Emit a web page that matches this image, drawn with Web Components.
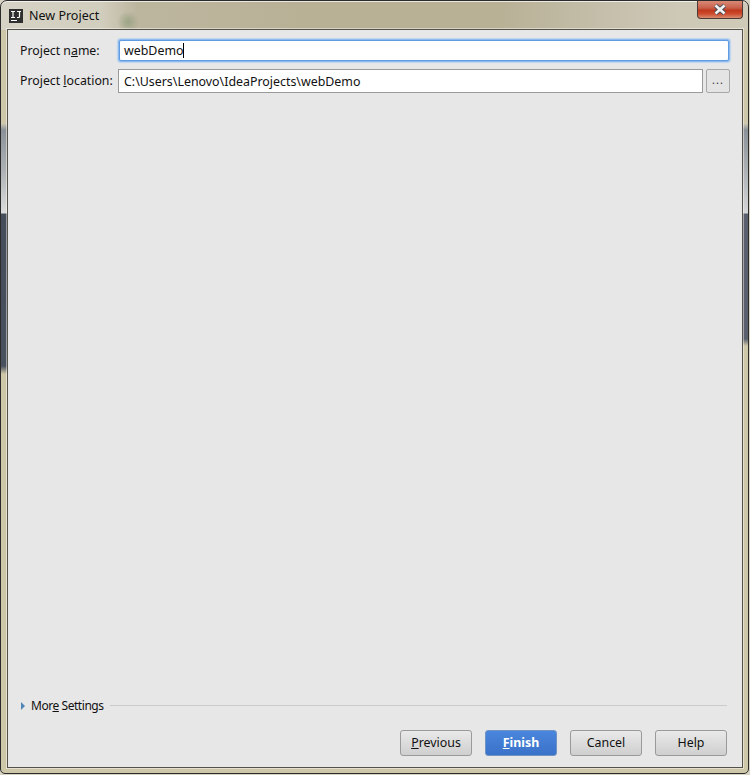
<!DOCTYPE html>
<html>
<head>
<meta charset="utf-8">
<title>New Project</title>
<style>
  html, body { margin: 0; padding: 0; background: #d8d4c4; }
  body { width: 750px; height: 775px; overflow: hidden; font-family: "Noto Sans", "Liberation Sans", sans-serif; }
</style>
</head>
<body>
<new-project-dialog>
  <form-row label="Project name:" mnemonic-at="9">
    <text-field value="webDemo" focused></text-field>
  </form-row>
  <form-row label="Project location:" mnemonic-at="8">
    <text-field value="C:\Users\Lenovo\IdeaProjects\webDemo"></text-field>
    <browse-button></browse-button>
  </form-row>
  <more-settings slot="footer"></more-settings>
  <dialog-button slot="buttons" label="Previous" mnemonic-at="0"></dialog-button>
  <dialog-button slot="buttons" label="Finish" mnemonic-at="0" primary></dialog-button>
  <dialog-button slot="buttons" label="Cancel"></dialog-button>
  <dialog-button slot="buttons" label="Help"></dialog-button>
</new-project-dialog>

<script>
// underlines one letter of a label, like the swing mnemonics
function mnemonicHtml(text, at) {
  if (at === null || at === "") return text;
  const i = Number(at);
  return text.slice(0, i) + "<u>" + text[i] + "</u>" + text.slice(i + 1);
}

class NewProjectDialog extends HTMLElement {
  constructor() {
    super();
    this.attachShadow({ mode: "open" });
    this.shadowRoot.innerHTML = `
      <style>
        :host {
          display: flex;
          flex-direction: column;
          box-sizing: border-box;
          position: relative;
          width: 749px;
          height: 774px;
          padding: 0 5px 5px 6px;
          border: 1px solid #2b2b2b;
          border-radius: 7px 7px 5px 5px;
          background:
            linear-gradient(to bottom, transparent 0, transparent 122px, #d3ccb4 122px, #8b9198 129px, #aeb2b5 170px, #dcdcdc 212px, #454c5a 213px, #4a515e 365px, #cfc8a8 373px) left top / 6px 100% no-repeat,
            linear-gradient(to bottom, transparent 0, transparent 122px, #d3ccb4 122px, #8b9198 129px, #aeb2b5 170px, #d5d6d8 212px, #5a616c 213px, #5a616c 338px, #cfc8a8 345px) right top / 5px 100% no-repeat,
            radial-gradient(circle at 127px 21px, rgba(125,145,105,.55) 0, rgba(125,145,105,.3) 5px, rgba(125,145,105,0) 11px) left top / 100% 29px no-repeat,
            linear-gradient(90deg, #d6d3c6 0, #d2cebe 100px, #bdb69f 135px, #b9b196 300px, #b9b196 500px, #c4beaa 600px, #cec9b7 680px, #cfcab8 100%) left top / 100% 29px no-repeat,
            #cfc7a9;
          box-shadow: inset 0 1px 0 rgba(255,255,255,.7);
        }
        .titlebar {
          flex: none;
          display: flex;
          align-items: center;
          gap: 6px;
          height: 28px;
          padding: 1px 0 0 2px;
          box-sizing: border-box;
          font-size: 12.5px;
          color: #111;
        }
        .close {
          position: absolute;
          top: 0;
          right: 5px;
          width: 46px;
          height: 18px;
          box-sizing: border-box;
          display: flex;
          align-items: center;
          justify-content: center;
          border: 1px solid #4d3a36;
          border-top: none;
          border-radius: 0 0 4px 4px;
          background: linear-gradient(to bottom, #d98a76 0, #c9614c 40%, #c0391c 55%, #cc4a2b 75%, #d98c70 100%);
        }
        .panel {
          flex: 1;
          display: flex;
          flex-direction: column;
          min-height: 0;
          background: #e7e7e7;
          border: 1px solid #55524a;
          box-shadow: 0 0 0 1px rgba(255,255,255,.45);
          padding: 9px 12px 11px 12px;
        }
        .fields { display: flex; flex-direction: column; gap: 7px; flex: 1; }
        .buttons { display: flex; justify-content: flex-end; gap: 13px; padding: 0 3px 0 0; margin-top: 16px; }
      </style>
      <div class="titlebar">
        <svg width="14" height="14" viewBox="0 0 14 14">
          <rect width="14" height="14" fill="#2f2f2f"/>
          <rect x="2" y="11" width="6" height="1" fill="#fff"/>
          <path d="M2 2.5H6M4 3V8M2 8.5H6M8 2.5H12M10.5 3V7.5Q10.5 8.5 9.5 8.5H8" fill="none" stroke="#fff" stroke-width="1.2"/>
        </svg>
        <span>New Project</span>
      </div>
      <div class="close">
        <svg width="14" height="11" viewBox="0 0 14 11">
          <path d="M2.5 1.5L11.5 9.5M11.5 1.5L2.5 9.5" stroke="#3c4454" stroke-width="4.4" fill="none"/>
          <path d="M2.5 1.5L11.5 9.5M11.5 1.5L2.5 9.5" stroke="#f2f2f2" stroke-width="2.8" fill="none"/>
        </svg>
      </div>
      <div class="panel">
        <div class="fields"><slot></slot></div>
        <slot name="footer"></slot>
        <div class="buttons"><slot name="buttons"></slot></div>
      </div>
    `;
  }
}

class FormRow extends HTMLElement {
  constructor() {
    super();
    this.attachShadow({ mode: "open" });
    this.shadowRoot.innerHTML = `
      <style>
        :host { display: flex; align-items: center; font-size: 12.3px; color: #111; }
        .label { flex: none; width: 98px; white-space: nowrap; padding-bottom: 1px; }
      </style>
      <span class="label"></span>
      <slot></slot>
    `;
  }
  connectedCallback() {
    this.shadowRoot.querySelector(".label").innerHTML = mnemonicHtml(
      this.getAttribute("label"),
      this.getAttribute("mnemonic-at")
    );
  }
}

class TextField extends HTMLElement {
  constructor() {
    super();
    this.attachShadow({ mode: "open" });
    this.shadowRoot.innerHTML = `
      <style>
        :host {
          flex: 1;
          display: flex;
          align-items: center;
          box-sizing: border-box;
          height: 24px;
          padding: 0 5px;
          background: #fff;
          border: 1px solid #9a9a9a;
          font-size: 12.4px;
          color: #111;
          white-space: nowrap;
        }
        :host([focused]) {
          height: 21px;
          margin: 1px;
          padding: 0 4px;
          border: 1px solid #5e9be0;
          border-radius: 2px;
          box-shadow: 0 0 0 1px #8fbbec, 0 0 1px 2px #bcd5f0;
        }
        .caret { display: none; width: 1px; height: 15px; background: #000; }
        :host([focused]) .caret { display: block; }
      </style>
      <span class="value"></span><span class="caret"></span>
    `;
  }
  connectedCallback() {
    this.shadowRoot.querySelector(".value").textContent = this.getAttribute("value");
  }
}

class BrowseButton extends HTMLElement {
  constructor() {
    super();
    this.attachShadow({ mode: "open" });
    this.shadowRoot.innerHTML = `
      <style>
        :host {
          flex: none;
          display: flex;
          align-items: center;
          justify-content: center;
          box-sizing: border-box;
          width: 24px;
          height: 24px;
          margin-left: 3px;
          padding-bottom: 3px;
          border: 1px solid #a8a8a8;
          border-radius: 2px;
          background: #e4e4e4;
          font-size: 11px;
          letter-spacing: 1px;
          color: #333;
        }
      </style>
      <span>...</span>
    `;
  }
}

class MoreSettings extends HTMLElement {
  constructor() {
    super();
    this.attachShadow({ mode: "open" });
    this.shadowRoot.innerHTML = `
      <style>
        :host { display: flex; align-items: center; font-size: 12px; color: #111; height: 16px; }
        svg { flex: none; margin: 0 6px 0 1px; }
        .text { letter-spacing: -.45px; padding-bottom: 1px; }
        .rule { flex: 1; height: 1px; background: #cbcbcb; margin: 0 3px 2px 6px; }
      </style>
      <svg width="4" height="8" viewBox="0 0 4 8"><path d="M0 0L4 4L0 8Z" fill="#4f86b5"/></svg>
      <span class="text">Mor<u>e</u> Settings</span>
      <div class="rule"></div>
    `;
  }
}

class DialogButton extends HTMLElement {
  constructor() {
    super();
    this.attachShadow({ mode: "open" });
    this.shadowRoot.innerHTML = `
      <style>
        :host {
          display: flex;
          align-items: center;
          justify-content: center;
          box-sizing: border-box;
          width: 72px;
          height: 26px;
          padding-bottom: 1px;
          border: 1px solid #9a9a9a;
          border-radius: 3px;
          background: linear-gradient(to bottom, #e9e9e9, #cfcfcf);
          font-size: 12.4px;
          color: #111;
        }
        :host([primary]) {
          border-color: #6f93c4;
          background: linear-gradient(to bottom, #4a86dd, #3a72c8);
          color: #fff;
          font-weight: 700;
        }
      </style>
      <span class="label"></span>
    `;
  }
  connectedCallback() {
    this.shadowRoot.querySelector(".label").innerHTML = mnemonicHtml(
      this.getAttribute("label"),
      this.getAttribute("mnemonic-at")
    );
  }
}

customElements.define("new-project-dialog", NewProjectDialog);
customElements.define("form-row", FormRow);
customElements.define("text-field", TextField);
customElements.define("browse-button", BrowseButton);
customElements.define("more-settings", MoreSettings);
customElements.define("dialog-button", DialogButton);
</script>
</body>
</html>
